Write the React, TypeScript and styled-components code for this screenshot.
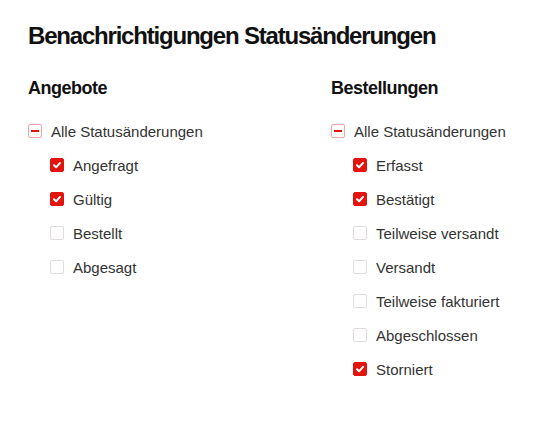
import React from 'react';
import styled, { createGlobalStyle } from 'styled-components';

const GlobalStyle = createGlobalStyle`
  html, body {
    margin: 0;
    padding: 0;
    background: #fff;
  }
  body {
    font-family: 'Liberation Sans', Arial, sans-serif;
    color: #222;
  }
`;

type BoxState = 'checked' | 'unchecked' | 'mixed';

interface iGroup {
  title: string;
  items: { label: string; checked: boolean }[];
}

const groups: iGroup[] = [
  {
    title: 'Angebote',
    items: [
      { label: 'Angefragt', checked: true },
      { label: 'Gültig', checked: true },
      { label: 'Bestellt', checked: false },
      { label: 'Abgesagt', checked: false },
    ],
  },
  {
    title: 'Bestellungen',
    items: [
      { label: 'Erfasst', checked: true },
      { label: 'Bestätigt', checked: true },
      { label: 'Teilweise versandt', checked: false },
      { label: 'Versandt', checked: false },
      { label: 'Teilweise fakturiert', checked: false },
      { label: 'Abgeschlossen', checked: false },
      { label: 'Storniert', checked: true },
    ],
  },
];

const red = '#e3140d';

const Page = styled.main`
  padding: 20px 28px;
`;

const Title = styled.h1`
  margin: 0;
  font-size: 24px;
  line-height: 32px;
  font-weight: bold;
  letter-spacing: -1.2px;
  color: #111;
`;

const Columns = styled.div`
  display: grid;
  grid-template-columns: 303px 1fr;
  margin-top: 24px;
`;

const Column = styled.section`
  display: flex;
  flex-direction: column;
`;

const GroupTitle = styled.h2`
  margin: 0 0 14px;
  font-size: 18px;
  line-height: 24px;
  font-weight: bold;
  letter-spacing: -0.5px;
  color: #111;
`;

const Row = styled.label<{ $indent?: boolean }>`
  display: flex;
  align-items: center;
  gap: 9px;
  height: 34px;
  padding-left: ${(p) => (p.$indent ? '22px' : '0')};
  font-size: 15px;
  color: #333;
  cursor: pointer;
`;

const Box = styled.span<{ $state: BoxState }>`
  box-sizing: border-box;
  width: 14px;
  height: 14px;
  flex: none;
  display: inline-flex;
  align-items: center;
  justify-content: center;
  border-radius: 2px;
  border: 1px solid
    ${(p) =>
      p.$state === 'checked' ? red : p.$state === 'mixed' ? '#f3a4a8' : '#e0dcdc'};
  background: ${(p) => (p.$state === 'checked' ? red : '#fff')};
`;

const Dash = styled.span`
  width: 8px;
  height: 2px;
  background: ${red};
`;

function CheckBox({ state }: { state: BoxState }) {
  return (
    <Box $state={state}>
      {state === 'checked' && (
        <svg width="10" height="10" viewBox="0 0 10 10">
          <path d="M2 5.3 L4.1 7.3 L8 2.9" fill="none" stroke="#fff" strokeWidth="2" strokeLinecap="round" strokeLinejoin="round" />
        </svg>
      )}
      {state === 'mixed' && <Dash />}
    </Box>
  );
}

function Group({ group }: { group: iGroup }) {
  const count = group.items.filter((i) => i.checked).length;
  const all: BoxState = count === 0 ? 'unchecked' : count === group.items.length ? 'checked' : 'mixed';
  return (
    <Column>
      <GroupTitle>{group.title}</GroupTitle>
      <Row>
        <CheckBox state={all} />
        Alle Statusänderungen
      </Row>
      {group.items.map((item) => (
        <Row $indent key={item.label}>
          <CheckBox state={item.checked ? 'checked' : 'unchecked'} />
          {item.label}
        </Row>
      ))}
    </Column>
  );
}

export default function App() {
  return (
    <>
      <GlobalStyle />
      <Page>
        <Title>Benachrichtigungen Statusänderungen</Title>
        <Columns>
          {groups.map((g) => (
            <Group key={g.title} group={g} />
          ))}
        </Columns>
      </Page>
    </>
  );
}
